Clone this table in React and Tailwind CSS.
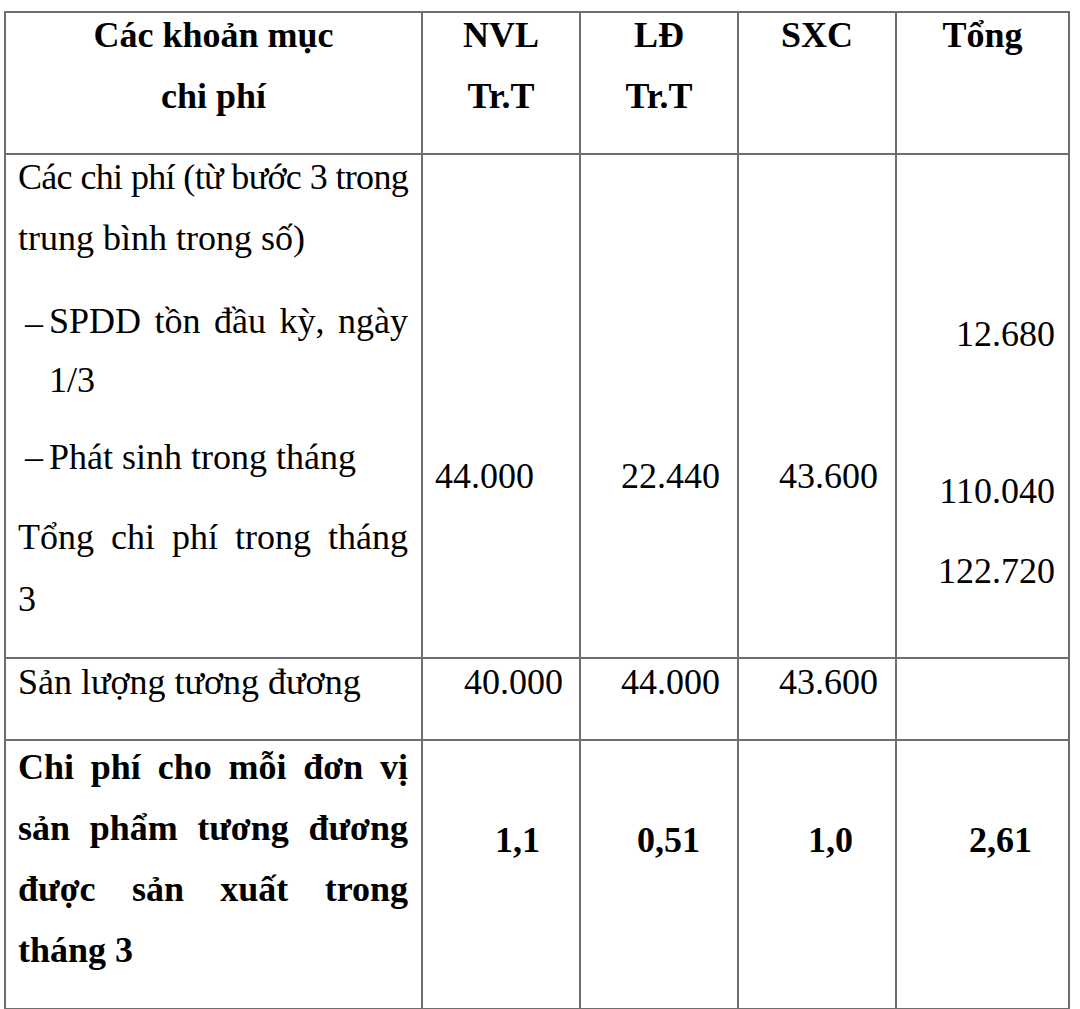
const cell = "border-r-2 border-b-2 border-[#6e6e6e]";
const just = "text-justify [text-align-last:justify]";

function Head({ lines }) {
  return (
    <div className={`${cell} flex flex-col items-center font-bold`}>
      {lines.map((t, i) => (
        <div key={i} className={i === 0 ? "-mt-[8px]" : ""}>
          {t}
        </div>
      ))}
    </div>
  );
}

function Dash({ children, className = "" }) {
  return (
    <div className={`flex ${className}`}>
      <span className="ml-[7px] w-[24px] shrink-0">–</span>
      <div className="flex-1">{children}</div>
    </div>
  );
}

export default function App() {
  return (
    <div className="min-h-screen bg-white pl-[4px] pt-[11px] font-['Liberation_Serif',serif] text-[36px] leading-[61px] text-black">
      <div className="grid w-fit grid-cols-[417px_158px_158px_158px_173px] grid-rows-[142px_504px_82px_269px] border-l-2 border-t-2 border-[#6e6e6e]">
        {/* header */}
        <Head lines={["Các khoản mục", "chi phí"]} />
        <Head lines={["NVL", "Tr.T"]} />
        <Head lines={["LĐ", "Tr.T"]} />
        <Head lines={["SXC"]} />
        <Head lines={["Tổng"]} />

        {/* chi phí */}
        <div className={`${cell} pl-[12px] pr-[13px]`}>
          <div className="-mt-[8px]">
            <div className={`${just} tracking-[-0.7px]`}>Các chi phí (từ bước 3 trong</div>
            <div>trung bình trong số)</div>
          </div>
          <Dash className="mt-[24px]">
            <div className={`${just} leading-[57px]`}>SPDD tồn đầu kỳ, ngày</div>
            <div>1/3</div>
          </Dash>
          <Dash className="mt-[16px]">
            <div>Phát sinh trong tháng</div>
          </Dash>
          <div className="mt-[19px]">
            <div className={just}>Tổng chi phí trong tháng</div>
            <div className="leading-[63px]">3</div>
          </div>
        </div>
        <div className={`${cell} pl-[12px] pt-[291px]`}>44.000</div>
        <div className={`${cell} pr-[17px] pt-[291px] text-right`}>22.440</div>
        <div className={`${cell} pr-[17px] pt-[291px] text-right`}>43.600</div>
        <div className={`${cell} pr-[13px] pt-[149px] text-right`}>
          <div>12.680</div>
          <div className="mt-[96px]">110.040</div>
          <div className="mt-[19px]">122.720</div>
        </div>

        {/* sản lượng */}
        <div className={`${cell} pl-[12px]`}>
          <div className="-mt-[7px]">Sản lượng tương đương</div>
        </div>
        <div className={`${cell} pr-[16px] text-right`}>
          <div className="-mt-[7px]">40.000</div>
        </div>
        <div className={`${cell} pr-[17px] text-right`}>
          <div className="-mt-[7px]">44.000</div>
        </div>
        <div className={`${cell} pr-[17px] text-right`}>
          <div className="-mt-[7px]">43.600</div>
        </div>
        <div className={cell}></div>

        {/* đơn vị */}
        <div className={`${cell} pl-[12px] pr-[13px] font-bold`}>
          <div className="-mt-[4px]">
            <div className={just}>Chi phí cho mỗi đơn vị</div>
            <div className={just}>sản phẩm tương đương</div>
            <div className={just}>được sản xuất trong</div>
            <div>tháng 3</div>
          </div>
        </div>
        <div className={`${cell} pr-[39px] pt-[69px] text-right font-bold`}>1,1</div>
        <div className={`${cell} pr-[37px] pt-[69px] text-right font-bold`}>0,51</div>
        <div className={`${cell} pr-[42px] pt-[69px] text-right font-bold`}>1,0</div>
        <div className={`${cell} pr-[36px] pt-[69px] text-right font-bold`}>2,61</div>
      </div>
    </div>
  );
}
